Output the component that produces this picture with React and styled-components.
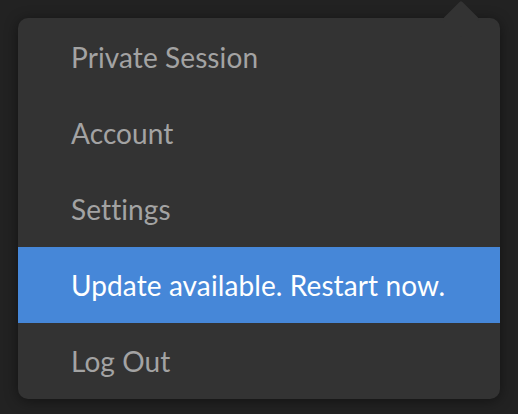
import React from "react";
import styled, { createGlobalStyle } from "styled-components";

const Global = createGlobalStyle`
  html, body {
    margin: 0;
    padding: 0;
    background: #212121;
    width: 518px;
    height: 414px;
    overflow: hidden;
  }
  * { box-sizing: border-box; }
`;

const Page = styled.div`
  width: 518px;
  height: 414px;
  padding: 18px 18px 0 18px;
  background: #222222;
  font-family: "Lato", "Noto Sans", sans-serif;
`;

const Menu = styled.ul`
  position: relative;
  list-style: none;
  margin: 0;
  padding: 1px 0 0 0;
  width: 482px;
  background: #333333;
  border-radius: 10px;
  box-shadow: 0 2px 14px rgba(0, 0, 0, 0.45);

  /* pointer toward the button the menu opens from */
  &::before {
    content: "";
    position: absolute;
    top: -12px;
    right: 26px;
    width: 26px;
    height: 26px;
    background: #333333;
    transform: rotate(45deg);
    border-radius: 2px;
  }
`;

const Item = styled.li`
  position: relative;
  display: flex;
  align-items: center;
  height: 76px;
  padding-left: 53px;
  padding-bottom: 1px;
  font-size: 28px;
  letter-spacing: 0.1px;
  color: ${(p) => (p.$active ? "#ffffff" : "#a3a3a3")};
  background: ${(p) => (p.$active ? "#4687d8" : "transparent")};
  &:last-child {
    border-radius: 0 0 10px 10px;
  }
`;

const items = [
  { label: "Private Session" },
  { label: "Account" },
  { label: "Settings" },
  { label: "Update available. Restart now.", active: true },
  { label: "Log Out" },
];

export default function App() {
  return (
    <>
      <Global />
      <Page>
        <Menu>
          {items.map((it) => (
            <Item key={it.label} $active={it.active}>
              {it.label}
            </Item>
          ))}
        </Menu>
      </Page>
    </>
  );
}
